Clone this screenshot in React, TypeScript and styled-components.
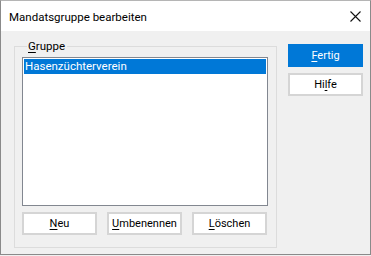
import React from 'react';
import styled, {createGlobalStyle} from "styled-components";

const GlobalStyle = createGlobalStyle`
    html, body {
        margin: 0;
        padding: 0;
        background: #f0f0f0;
    }
    body {
        font-family: Roboto, "Noto Sans", "Liberation Sans", sans-serif;
        font-size: 11.5px;
        color: #000;
    }
`;

const Window = styled.div`
    box-sizing: border-box;
    width: 371px;
    height: 255px;
    display: flex;
    flex-direction: column;
    background: #f0f0f0;
    border: 1px solid #8a8a8a;
    border-top-color: #b5b5b5;
`;

const TitleBar = styled.div`
    height: 30px;
    flex: none;
    display: flex;
    align-items: center;
    justify-content: space-between;
    background: #ffffff;
    padding: 0 9px 0 8px;
`;

const Title = styled.span`
    font-size: 11.5px;
    line-height: 16px;
    margin-top: 1px;
`;

const CloseIcon = styled.svg`
    width: 11px;
    height: 11px;
`;

const Body = styled.div`
    flex: 1;
    display: flex;
    align-items: flex-start;
    padding: 8px 6px 0 13px;
    gap: 11px;
`;

const Group = styled.fieldset`
    box-sizing: border-box;
    width: 263px;
    height: 209px;
    margin: 0;
    padding: 3px 8px 0 7px;
    border: 1px solid #dcdcdc;
    display: flex;
    flex-direction: column;
    gap: 6px;
    min-width: 0;
`;

const Legend = styled.legend`
    padding: 0 2px 0 1px;
    margin-left: 5px;
    line-height: 15px;
`;

const Mnemonic = styled.u`
    text-decoration: underline;
    text-underline-offset: 2px;
`;

const ListBox = styled.div`
    box-sizing: border-box;
    width: 246px;
    height: 149px;
    background: #fff;
    border: 1px solid #828790;
    padding: 1px;
`;

const ListItem = styled.div<{ $selected?: boolean }>`
    height: 15px;
    line-height: 15px;
    padding-left: 1px;
    font-size: 11.5px;
    background: ${p => p.$selected ? "#0078d7" : "transparent"};
    color: ${p => p.$selected ? "#fff" : "#000"};
    white-space: nowrap;
`;

const ButtonRow = styled.div`
    display: flex;
    gap: 10px;
`;

const Button = styled.button<{ $primary?: boolean }>`
    box-sizing: border-box;
    width: 75px;
    height: 23px;
    padding: 0;
    font-family: inherit;
    font-size: 11px;
    line-height: 15px;
    color: ${p => p.$primary ? "#fff" : "#000"};
    background: ${p => p.$primary ? "#0078d7" : "#fff"};
    border: 2px solid ${p => p.$primary ? "#0078d7" : "#d5d5d5"};
`;

const SideColumn = styled.div`
    display: flex;
    flex-direction: column;
    gap: 6px;
    padding-top: 5px;
`;

export default function App() {
    return (
        <>
            <GlobalStyle/>
            <Window>
                <TitleBar>
                    <Title>Mandatsgruppe bearbeiten</Title>
                    <CloseIcon viewBox="0 0 11 11">
                        <path d="M0.5 0.5 L10.5 10.5 M10.5 0.5 L0.5 10.5" stroke="#111" strokeWidth="1.1" fill="none"/>
                    </CloseIcon>
                </TitleBar>
                <Body>
                    <Group>
                        <Legend><Mnemonic>G</Mnemonic>ruppe</Legend>
                        <ListBox>
                            <ListItem $selected>Hasenzüchterverein</ListItem>
                        </ListBox>
                        <ButtonRow>
                            <Button><Mnemonic>N</Mnemonic>eu</Button>
                            <Button><Mnemonic>U</Mnemonic>mbenennen</Button>
                            <Button><Mnemonic>L</Mnemonic>öschen</Button>
                        </ButtonRow>
                    </Group>
                    <SideColumn>
                        <Button $primary><Mnemonic>F</Mnemonic>ertig</Button>
                        <Button>Hi<Mnemonic>l</Mnemonic>fe</Button>
                    </SideColumn>
                </Body>
            </Window>
        </>
    );
}
